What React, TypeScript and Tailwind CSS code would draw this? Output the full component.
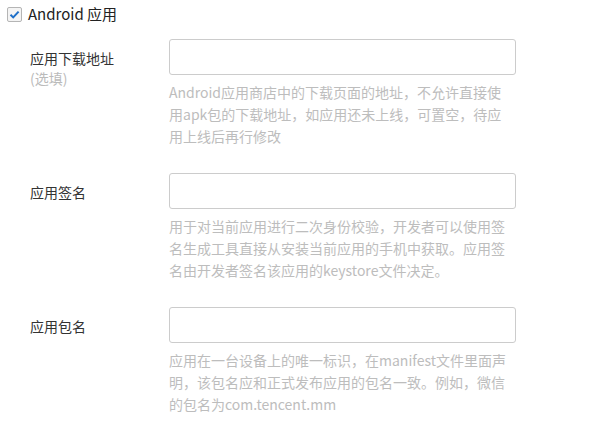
const rows = [
  {
    label: "应用下载地址",
    sub: "(选填)",
    help: [
      "Android应用商店中的下载页面的地址，不允许直接使",
      "用apk包的下载地址，如应用还未上线，可置空，待应",
      "用上线后再行修改",
    ],
  },
  {
    label: "应用签名",
    help: [
      "用于对当前应用进行二次身份校验，开发者可以使用签",
      "名生成工具直接从安装当前应用的手机中获取。应用签",
      "名由开发者签名该应用的keystore文件决定。",
    ],
  },
  {
    label: "应用包名",
    help: [
      "应用在一台设备上的唯一标识，在manifest文件里面声",
      "明，该包名应和正式发布应用的包名一致。例如，微信",
      "的包名为com.tencent.mm",
    ],
  },
];

function FormRow({ label, sub, help }: { label: string; sub?: string; help: string[] }) {
  return (
    <div className="flex">
      <div className="w-[162px] shrink-0 pl-[23px] pt-[9px] text-[14px] leading-[20px]">
        <div className="text-[#333]">{label}</div>
        {sub && <div className="text-[#bbb]">{sub}</div>}
      </div>
      <div className="w-[347px]">
        <input className="block h-[36px] w-full rounded-[3px] border border-[#ccc] bg-white px-2 outline-none" />
        <div className="mt-[6px] text-[14px] leading-[22px] text-[#bdbdbd]">
          {help.map((line) => (
            <div key={line} className="whitespace-nowrap">
              {line}
            </div>
          ))}
        </div>
      </div>
    </div>
  );
}

export default function App() {
  return (
    <div
      className="h-[426px] w-[614px] bg-white pl-[7px] pt-[5px]"
      style={{ fontFamily: '"Noto Sans CJK SC", "Liberation Sans", sans-serif' }}
    >
      <label className="flex h-[18px] items-center gap-[6px] text-[15px] text-[#222]">
        <span className="flex h-[15px] w-[15px] items-center justify-center rounded-[2px] border border-[#b5b5b5] bg-[#f4f4f4]">
          <svg width="11" height="11" viewBox="0 0 11 11">
            <path d="M1.5 5.8 L4.2 8.4 L9.6 2.6" fill="none" stroke="#1e6fc8" strokeWidth="2" />
          </svg>
        </span>
        Android 应用
      </label>
      <div className="mt-[16px] flex flex-col gap-[26px]">
        {rows.map((r) => (
          <FormRow key={r.label} {...r} />
        ))}
      </div>
    </div>
  );
}
